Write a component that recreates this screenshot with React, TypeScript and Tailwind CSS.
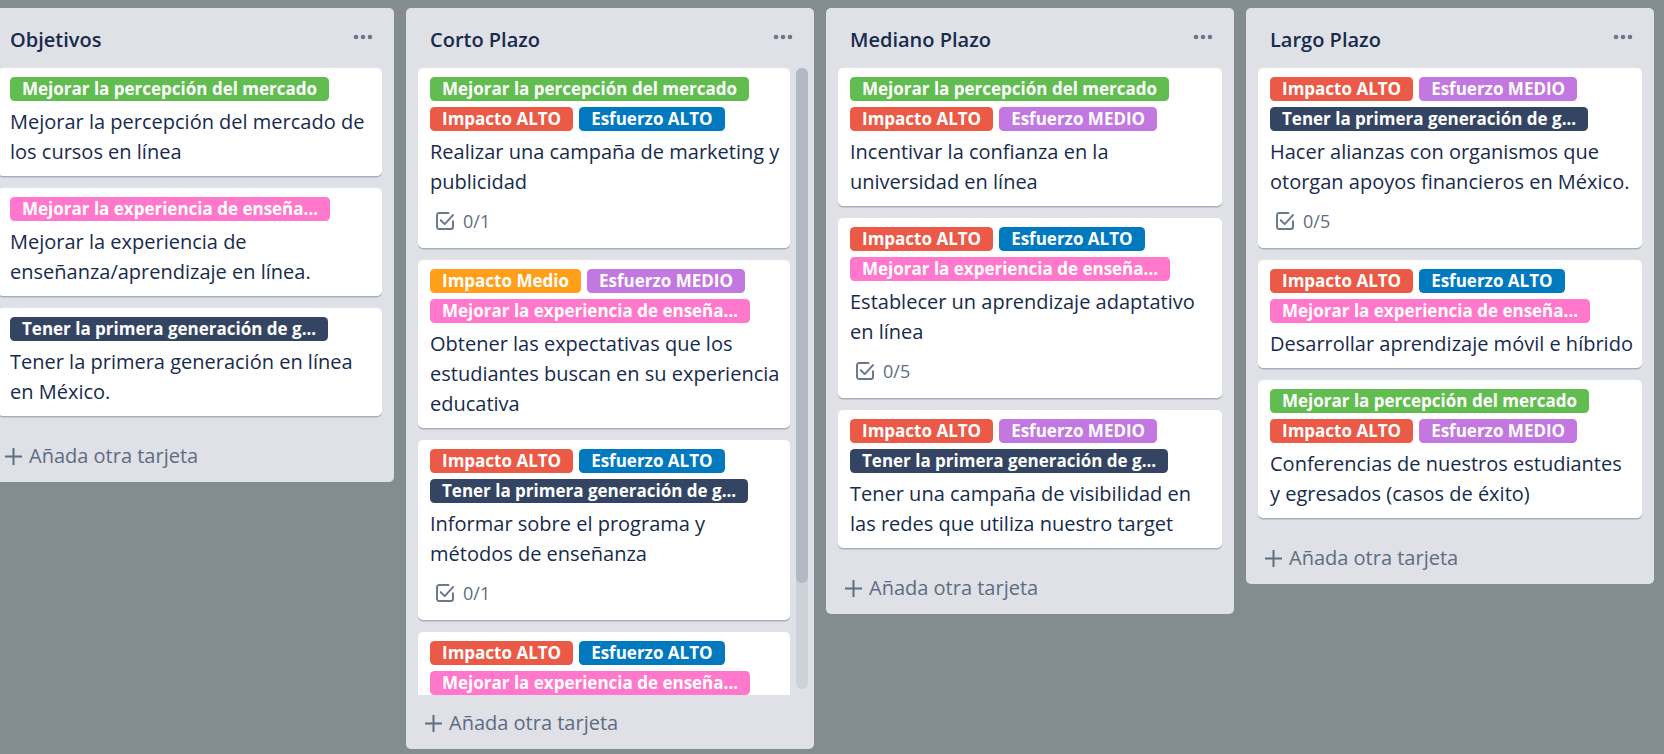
import React from "react";

type LabelColor = "green" | "red" | "blue" | "orange" | "purple" | "pink" | "navy";

type Card = {
  labels: { text: string; color: LabelColor }[];
  lines: string[];
  badge?: string;
};

type Column = {
  title: string;
  cards: Card[];
  scroll?: boolean;
};

const labelBg: Record<LabelColor, string> = {
  green: "bg-[#61bd4f]",
  red: "bg-[#eb5a46]",
  blue: "bg-[#0079bf]",
  orange: "bg-[#ff9f1a]",
  purple: "bg-[#c377e0]",
  pink: "bg-[#ff78cb]",
  navy: "bg-[#344563]",
};

const GREEN = { text: "Mejorar la percepción del mercado", color: "green" as LabelColor };
const PINK = { text: "Mejorar la experiencia de enseña...", color: "pink" as LabelColor };
const NAVY = { text: "Tener la primera generación de g...", color: "navy" as LabelColor };
const IMP_ALTO = { text: "Impacto ALTO", color: "red" as LabelColor };
const IMP_MEDIO = { text: "Impacto Medio", color: "orange" as LabelColor };
const ESF_ALTO = { text: "Esfuerzo ALTO", color: "blue" as LabelColor };
const ESF_MEDIO = { text: "Esfuerzo MEDIO", color: "purple" as LabelColor };

const columns: Column[] = [
  {
    title: "Objetivos",
    cards: [
      { labels: [GREEN], lines: ["Mejorar la percepción del mercado de", "los cursos en línea"] },
      { labels: [PINK], lines: ["Mejorar la experiencia de", "enseñanza/aprendizaje en línea."] },
      { labels: [NAVY], lines: ["Tener la primera generación en línea", "en México."] },
    ],
  },
  {
    title: "Corto Plazo",
    scroll: true,
    cards: [
      {
        labels: [GREEN, IMP_ALTO, ESF_ALTO],
        lines: ["Realizar una campaña de marketing y", "publicidad"],
        badge: "0/1",
      },
      {
        labels: [IMP_MEDIO, ESF_MEDIO, PINK],
        lines: ["Obtener las expectativas que los", "estudiantes buscan en su experiencia", "educativa"],
      },
      {
        labels: [IMP_ALTO, ESF_ALTO, NAVY],
        lines: ["Informar sobre el programa y", "métodos de enseñanza"],
        badge: "0/1",
      },
      {
        labels: [IMP_ALTO, ESF_ALTO, PINK],
        lines: [],
      },
    ],
  },
  {
    title: "Mediano Plazo",
    cards: [
      {
        labels: [GREEN, IMP_ALTO, ESF_MEDIO],
        lines: ["Incentivar la confianza en la", "universidad en línea"],
      },
      {
        labels: [IMP_ALTO, ESF_ALTO, PINK],
        lines: ["Establecer un aprendizaje adaptativo", "en línea"],
        badge: "0/5",
      },
      {
        labels: [IMP_ALTO, ESF_MEDIO, NAVY],
        lines: ["Tener una campaña de visibilidad en", "las redes que utiliza nuestro target"],
      },
    ],
  },
  {
    title: "Largo Plazo",
    cards: [
      {
        labels: [IMP_ALTO, ESF_MEDIO, NAVY],
        lines: ["Hacer alianzas con organismos que", "otorgan apoyos financieros en México."],
        badge: "0/5",
      },
      {
        labels: [IMP_ALTO, ESF_ALTO, PINK],
        lines: ["Desarrollar aprendizaje móvil e híbrido"],
      },
      {
        labels: [GREEN, IMP_ALTO, ESF_MEDIO],
        lines: ["Conferencias de nuestros estudiantes", "y egresados (casos de éxito)"],
      },
    ],
  },
];

function ChecklistIcon() {
  return (
    <svg width="22" height="22" viewBox="0 0 16 16" fill="none">
      <path
        d="M10.5 2.2H3.6A1.4 1.4 0 0 0 2.2 3.6v8.8a1.4 1.4 0 0 0 1.4 1.4h8.8a1.4 1.4 0 0 0 1.4-1.4V8.2"
        stroke="#6b778c"
        strokeWidth="1.45"
        strokeLinecap="round"
      />
      <path
        d="M4.9 7.4l2.9 2.9 6-6.6"
        stroke="#6b778c"
        strokeWidth="1.45"
        strokeLinecap="round"
        strokeLinejoin="round"
      />
    </svg>
  );
}

function Dots() {
  return (
    <svg width="20" height="6" viewBox="0 0 20 6">
      <circle cx="3" cy="3" r="2.3" fill="#6b778c" />
      <circle cx="10" cy="3" r="2.3" fill="#6b778c" />
      <circle cx="17" cy="3" r="2.3" fill="#6b778c" />
    </svg>
  );
}

function PlusIcon() {
  return (
    <svg width="19" height="19" viewBox="0 0 19 19">
      <path d="M9.5 1v17M1 9.5h17" stroke="#5e6c84" strokeWidth="2" />
    </svg>
  );
}

function CardView({ card }: { card: Card }) {
  return (
    <div className="bg-white rounded-[5px] shadow-[0_1.5px_0_rgba(9,30,66,0.25)] pt-[9px] px-[12px] pb-[3px] shrink-0">
      <div className="flex flex-wrap gap-[6px] mb-[6px]">
        {card.labels.map((l, i) => (
          <span
            key={i}
            className={`${labelBg[l.color]} h-[24px] leading-[24px] px-[12px] rounded-[4.5px] text-white font-bold text-[17px] whitespace-nowrap`}
          >
            {l.text}
          </span>
        ))}
      </div>
      {card.lines.length > 0 && (
        <div className="text-[20px] leading-[30px] text-[#172b4d] mb-[6px]">
          {card.lines.map((ln, i) => (
            <div key={i} className="whitespace-nowrap">
              {ln}
            </div>
          ))}
        </div>
      )}
      {card.badge && (
        <div className="flex items-center h-[36px] mb-[6px] pl-[4px] text-[#5e6c84] text-[18px]">
          <ChecklistIcon />
          <span className="ml-[7px]">{card.badge}</span>
        </div>
      )}
    </div>
  );
}

function Composer() {
  return (
    <div className="h-[54px] shrink-0 flex items-center pt-[2px] pl-[18px] text-[20px] text-[#5e6c84]">
      <PlusIcon />
      <span className="ml-[6px]">Añada otra tarjeta</span>
    </div>
  );
}

function ColumnView({ col }: { col: Column }) {
  return (
    <div
      className={`w-[408px] shrink-0 bg-[#dfe1e6] rounded-[5px] flex flex-col ${
        col.scroll ? "h-[741px]" : ""
      }`}
    >
      <div className="h-[60px] shrink-0 flex items-center justify-between pl-[24px] pr-[21px] pt-[4px]">
        <span className="text-[20px] font-semibold text-[#172b4d]">{col.title}</span>
        <span className="mb-[6px]">
          <Dots />
        </span>
      </div>
      {col.scroll ? (
        <div className="flex-1 min-h-0 flex pl-[12px] pr-[6px]">
          <div className="w-[372px] overflow-hidden flex flex-col gap-[12px]">
            {col.cards.map((c, i) => (
              <CardView key={i} card={c} />
            ))}
          </div>
          <div className="w-[12px] ml-[6px] mb-[6px] bg-[#cdd2d9] rounded-[6px] flex flex-col">
            <div className="h-[515px] bg-[#b3b9c4] rounded-[6px]" />
          </div>
        </div>
      ) : (
        <div className="flex flex-col gap-[12px] px-[12px] pb-[12px]">
          {col.cards.map((c, i) => (
            <CardView key={i} card={c} />
          ))}
        </div>
      )}
      <Composer />
    </div>
  );
}

export default function App() {
  return (
    <div className="w-[1664px] h-[754px] overflow-hidden bg-[#838c91] font-['Open_Sans',sans-serif]">
      <div className="flex items-start gap-[12px] pt-[8px] ml-[-14px]">
        {columns.map((c, i) => (
          <ColumnView key={i} col={c} />
        ))}
      </div>
    </div>
  );
}
